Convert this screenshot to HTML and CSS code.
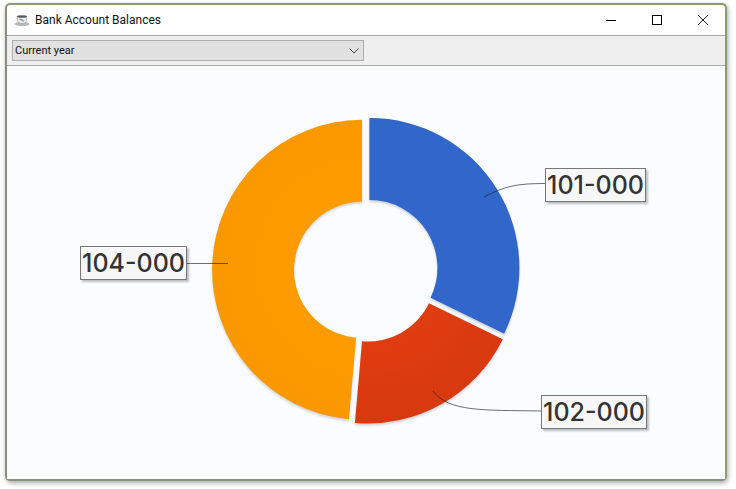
FILE: index.html
```html
<!DOCTYPE html>
<html lang="en">
<head>
    <meta charset="utf-8" />
    <meta name="viewport" content="width=device-width, initial-scale=1.0" />
    <title>Bank Account Balances</title>
    <link rel="stylesheet" href="styles.css">
</head>
<body>
    <div class="window">
        <header class="titlebar">
            <svg class="app-icon" width="16" height="14" viewBox="0 0 16 14">
                <ellipse cx="8" cy="11" rx="7.5" ry="2.2" fill="#b9b9b9" />
                <path d="M3 3.5h10l-1 6q-4 2.2-8 0z" fill="#ececec" stroke="#8a8a8a" stroke-width=".5" />
                <ellipse cx="8" cy="3.5" rx="5" ry="1.3" fill="#5a5a5a" />
                <path d="M5.5 6l4.5 2" stroke="#7fa8c6" stroke-width="1.6" />
            </svg>
            <span class="title">Bank Account Balances</span>
            <div class="caption-buttons">
                <svg width="10" height="10" viewBox="0 0 10 10"><path d="M0 5.5h10" stroke="#000" /></svg>
                <svg width="10" height="10" viewBox="0 0 10 10"><rect x=".5" y=".5" width="9" height="9" fill="none" stroke="#000" /></svg>
                <svg width="10" height="10" viewBox="0 0 10 10"><path d="M0 0l10 10M10 0L0 10" stroke="#000" stroke-width=".9" /></svg>
            </div>
        </header>

        <div class="toolbar">
            <div class="combo">
                <span>Current year</span>
                <svg width="10" height="6" viewBox="0 0 10 6"><path d="M.5 .5L5 5l4.5-4.5" fill="none" stroke="#444" /></svg>
            </div>
        </div>

        <main class="chart">
            <svg class="donut" width="718" height="413" viewBox="0 0 718 413">
                <defs>
                    <radialGradient id="blueFill" gradientUnits="userSpaceOnUse" cx="360" cy="200" r="150">
                        <stop offset="0" stop-color="#3366cc" />
                        <stop offset="1" stop-color="#3166cb" />
                    </radialGradient>
                    <radialGradient id="redFill" gradientUnits="userSpaceOnUse" cx="360" cy="200" r="150">
                        <stop offset=".5" stop-color="#e03c12" />
                        <stop offset="1" stop-color="#d8390f" />
                    </radialGradient>
                    <radialGradient id="orangeFill" gradientUnits="userSpaceOnUse" cx="360" cy="200" r="150">
                        <stop offset=".5" stop-color="#fd9b00" />
                        <stop offset="1" stop-color="#f99800" />
                    </radialGradient>
                </defs>
                <g class="slices">
                    <path id="sliceBlue" fill="url(#blueFill)" />
                    <path id="sliceRed" fill="url(#redFill)" />
                    <path id="sliceOrange" fill="url(#orangeFill)" />
                </g>
                <g class="leaders">
                    <path d="M538 117.5C510 117.5 498 120 477 131" />
                    <path d="M534 345C475 344 442 346 426 325" />
                    <path d="M180 197.5H221" />
                </g>
            </svg>
            <div class="tag tag-blue">101-000</div>
            <div class="tag tag-red">102-000</div>
            <div class="tag tag-orange">104-000</div>
        </main>
    </div>

    <script>
        // chart centre and radii, in coordinates of the chart area
        const cx = 359, cy = 204, outer = 150, inner = 68, pull = 4;

        function slicePath(from, to) {
            const rad = d => (d - 90) * Math.PI / 180;
            const mid = rad((from + to) / 2);
            const ox = cx + pull * Math.cos(mid);
            const oy = cy + pull * Math.sin(mid);
            const pt = (r, d) => (ox + r * Math.cos(rad(d))).toFixed(2) + ' ' + (oy + r * Math.sin(rad(d))).toFixed(2);
            const big = to - from > 180 ? 1 : 0;
            return `M${pt(outer, from)}A${outer} ${outer} 0 ${big} 1 ${pt(outer, to)}L${pt(inner, to)}A${inner} ${inner} 0 ${big} 0 ${pt(inner, from)}Z`;
        }

        document.getElementById('sliceBlue').setAttribute('d', slicePath(0, 116));
        document.getElementById('sliceRed').setAttribute('d', slicePath(116, 185));
        document.getElementById('sliceOrange').setAttribute('d', slicePath(185, 360));
    </script>
</body>
</html>
```

FILE: styles.css
```css
body {
    margin: 0;
    padding: 3px 9px 8px 5px;
    height: 489px;
    box-sizing: border-box;
    background-color: white;
    font-family: Roboto, sans-serif;
    overflow: hidden;
}

.window {
    height: 100%;
    box-sizing: border-box;
    display: flex;
    flex-direction: column;
    border: 2px solid #8a9e6c;
    border-left-color: #87907c;
    border-bottom-color: #87907c;
    border-radius: 5px;
    box-shadow: 1px 2px 5px rgba(0, 0, 0, 0.35);
    background-color: white;
}

.titlebar {
    height: 31px;
    flex: none;
    box-sizing: border-box;
    display: flex;
    align-items: center;
    padding-left: 7px;
    border-bottom: 1px solid #a9a9a9;
}

.app-icon {
    margin-right: 5px;
}

.title {
    flex: 1;
    font-size: 12px;
    color: #111;
}

.caption-buttons {
    display: flex;
    gap: 36px;
    padding-right: 17px;
}

.toolbar {
    height: 30px;
    flex: none;
    box-sizing: border-box;
    padding: 4px 5px;
    background-color: #efefef;
    border-bottom: 1px solid #a9a9a9;
}

.combo {
    width: 352px;
    height: 21px;
    box-sizing: border-box;
    display: flex;
    justify-content: space-between;
    align-items: center;
    padding: 0 4px 1px 2px;
    background-color: #e1e1e1;
    border: 1px solid #adadad;
    font-size: 11px;
    color: #111;
}

.combo svg {
    margin-top: 2px;
}

.chart {
    flex: 1;
    position: relative;
    background-color: #fafcff;
    overflow: hidden;
}

.donut {
    display: block;
}

.slices {
    filter: drop-shadow(0 2px 1px rgba(0, 0, 0, 0.16));
}

.leaders path {
    fill: none;
    stroke: #222;
    stroke-opacity: 0.65;
    stroke-width: 1;
}

.tag {
    position: absolute;
    box-sizing: border-box;
    height: 34px;
    display: flex;
    align-items: center;
    justify-content: center;
    background-color: #f7f7f7;
    border: 1px solid #777;
    box-shadow: 2px 2px 2px rgba(0, 0, 0, 0.25);
    font-family: Inter, sans-serif;
    font-size: 25px;
    font-weight: 450;
    color: #333;
}

.tag-blue {
    left: 538px;
    top: 102px;
    width: 101px;
}

.tag-red {
    left: 534px;
    top: 329px;
    width: 106px;
}

.tag-orange {
    left: 73px;
    top: 180px;
    width: 107px;
}
```
